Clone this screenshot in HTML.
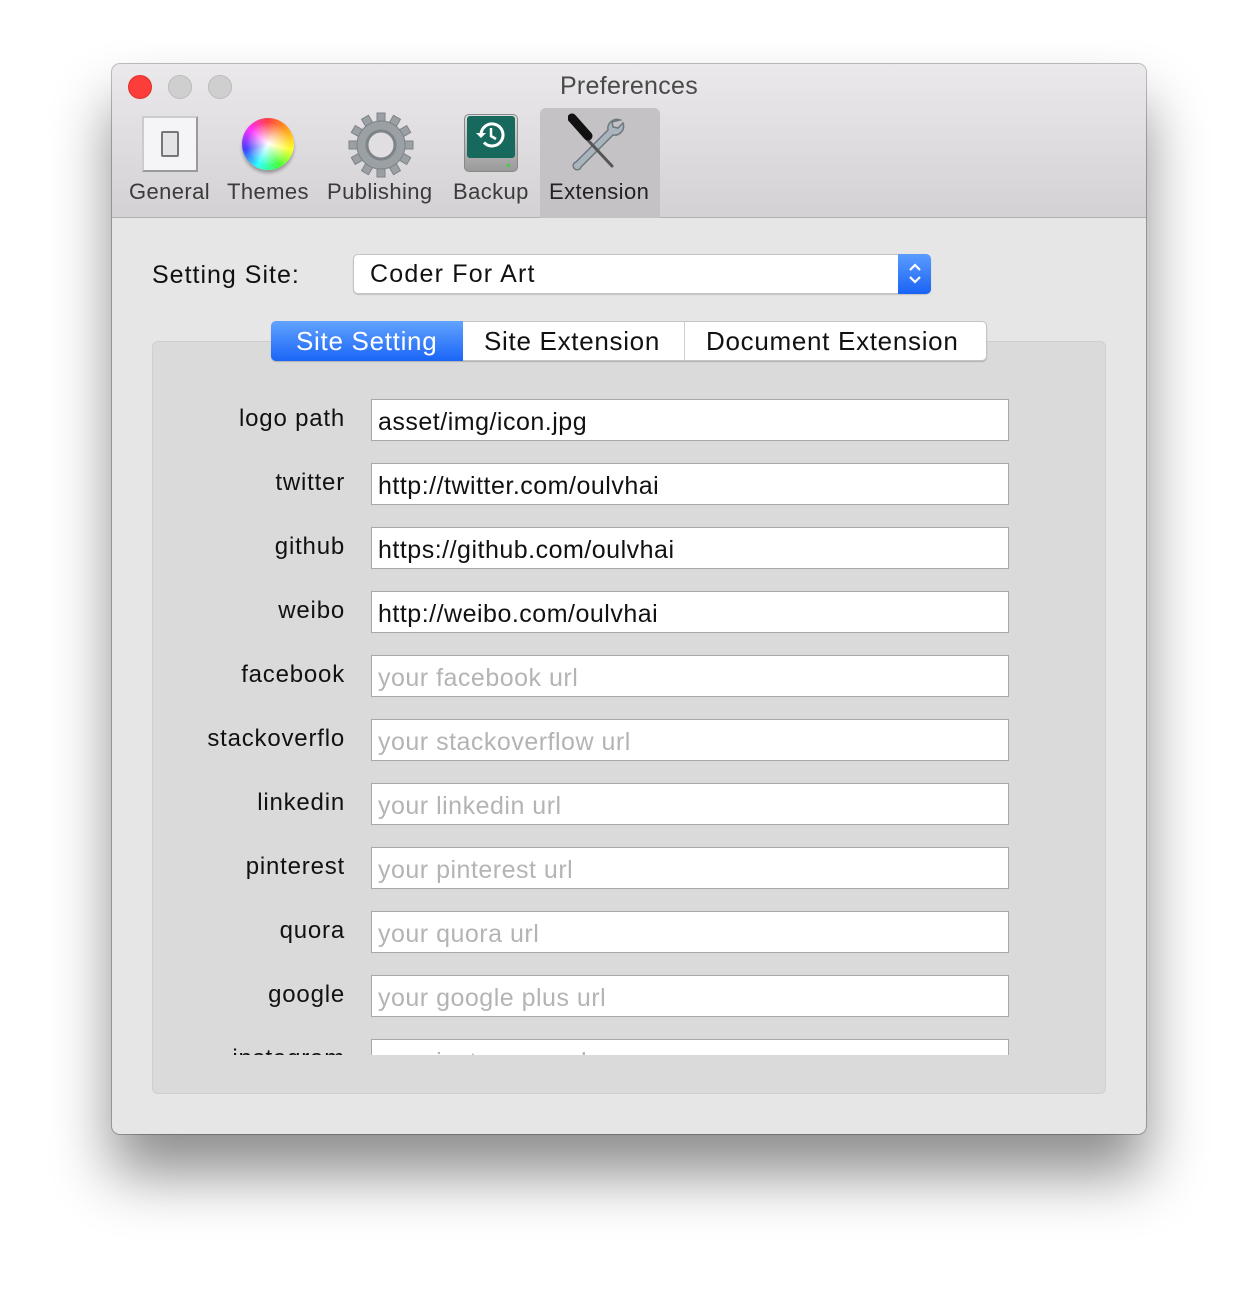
<!DOCTYPE html>
<html><head><meta charset="utf-8"><style>
*{margin:0;padding:0;box-sizing:border-box}
body{width:1258px;height:1294px;background:#fff;position:relative;overflow:hidden;font-family:"Liberation Sans",Arial,sans-serif}
.win{position:absolute;left:112px;top:64px;width:1034px;height:1070px;background:#e6e6e6;border-radius:8px;box-shadow:0 40px 60px rgba(0,0,0,.45),0 0 0 1px rgba(0,0,0,.25);overflow:hidden}
.tb{position:absolute;left:0;top:0;width:100%;height:154px;background:linear-gradient(#ebe9eb,#d3d1d3);border-bottom:1px solid #b0b0b0}
.dot{position:absolute;top:11px;width:24px;height:24px;border-radius:50%}
.title{position:absolute;left:0;width:100%;top:8px;text-align:center;font-size:25px;color:#4a4a4a;letter-spacing:.3px}
.lbl{position:absolute;top:115px;font-size:22px;color:#3b3b3b;letter-spacing:.4px}
.a{position:absolute}
.row .l{position:absolute;right:801px;font-size:24px;color:#111;text-align:right;white-space:nowrap;letter-spacing:.8px}
.f{position:absolute;left:259px;width:638px;height:42px;background:#fff;border:1px solid #a8a8a8;font-size:25px;padding:8px 0 0 6px;color:#111;white-space:nowrap;overflow:hidden;letter-spacing:.5px}
.ph{color:#b4b4b4}
</style></head><body>
<div class="win">
 <div class="tb">
  <div class="dot" style="left:16px;background:#fc3d39;border:1px solid #e0322e"></div>
  <div class="dot" style="left:56px;background:#d0cfd0;border:1px solid #bbb"></div>
  <div class="dot" style="left:96px;background:#d0cfd0;border:1px solid #bbb"></div>
  <div class="title" style="left:0px">Preferences</div>
  <div class="a" style="left:428px;top:44px;width:120px;height:110px;background:#c4c2c4;border-radius:6px 6px 0 0"></div>
  <div class="a" style="left:30px;top:52px;width:56px;height:56px;background:#f5f5f7;border:2px solid #9a9a9a;border-top-color:#ccc;border-left-color:#ccc"></div>
  <div class="a" style="left:49px;top:67px;width:18px;height:26px;background:#e4e4e6;border:2px solid #777;border-radius:2px"></div>
  <div class="a" style="left:130px;top:54px;width:52px;height:52px;border-radius:50%;background:radial-gradient(circle at 50% 50%,#fff 0,rgba(255,255,255,0) 60%),conic-gradient(from 0deg,#ff4040,#ffa020,#ffff30,#40ff40,#30ffff,#4040ff,#ff30ff,#ff4040);box-shadow:0 3px 3px rgba(0,0,0,.3)"></div>
  <svg class="a" style="left:236px;top:48px" width="66" height="66" viewBox="-33 -33 66 66">
   <g fill="#9aa0a4" stroke="#7d8387" stroke-width="1">
    <path d="M-4,-32h8v10h-8z M-4,22h8v10h-8z M22,-4h10v8h-10z M-32,-4h10v8h-10z" />
    <path transform="rotate(30)" d="M-4,-32h8v10h-8z M-4,22h8v10h-8z M22,-4h10v8h-10z M-32,-4h10v8h-10z" />
    <path transform="rotate(60)" d="M-4,-32h8v10h-8z M-4,22h8v10h-8z M22,-4h10v8h-10z M-32,-4h10v8h-10z" />
    <circle r="24"/>
   </g>
   <circle r="14" fill="#e0dee0" stroke="#7d8387" stroke-width="3"/>
  </svg>
  <div class="a" style="left:352px;top:50px;width:54px;height:58px;border-radius:5px;background:linear-gradient(#ddd,#9a9a9a);border:1px solid #888"></div>
  <div class="a" style="left:355px;top:52px;width:48px;height:42px;background:#17695d;border-radius:3px"></div>
  <svg class="a" style="left:363px;top:55px" width="32" height="32" viewBox="0 0 32 32"><path d="M6 16a11 11 0 1 1 3 7.5" fill="none" stroke="#fff" stroke-width="3"/><path d="M1 14l5 5 5-5z" fill="#fff"/><path d="M16 9v8l5 3" fill="none" stroke="#fff" stroke-width="2.5"/></svg>
  <div class="a" style="left:395px;top:100px;width:3px;height:3px;background:#4c4"></div>
  <svg class="a" style="left:456px;top:48px" width="62" height="62" viewBox="0 0 62 62">
   <path d="M52 8a9 9 0 0 0-12 10L8 50a4 4 0 1 0 5 5L45 23a9 9 0 0 0 10-12l-5 5-5-1-1-5z" fill="#aab4bc" stroke="#6d777f" stroke-width="1.5"/>
   <path d="M16 24L44 54" stroke="#555" stroke-width="3" stroke-linecap="round"/>
   <path d="M4 6L20 24" stroke="#111" stroke-width="9" stroke-linecap="round"/>
  </svg>
  <div class="lbl" style="left:17px">General</div>
  <div class="lbl" style="left:115px">Themes</div>
  <div class="lbl" style="left:215px">Publishing</div>
  <div class="lbl" style="left:341px">Backup</div>
  <div class="lbl" style="left:437px;color:#222">Extension</div>
 </div>
 <div class="a" style="left:40px;top:197px;font-size:25px;color:#111;letter-spacing:1px">Setting Site:</div>
 <div class="a" style="left:241px;top:190px;width:578px;height:40px;background:#fff;border-radius:5px;border:1px solid #c4c4c4;box-shadow:0 1px 1px rgba(0,0,0,.15);font-size:25px;padding:5px 0 0 16px;color:#111;letter-spacing:1.2px">Coder For Art</div>
 <div class="a" style="left:786px;top:190px;width:33px;height:40px;background:linear-gradient(#5a9cff,#1a63f5);border-radius:0 5px 5px 0"></div>
 <svg class="a" style="left:794px;top:196px" width="18" height="28" viewBox="0 0 18 28"><path d="M4 10l5-5 5 5M4 17l5 5 5-5" fill="none" stroke="#fff" stroke-width="2.2"/></svg>
 <div class="a" style="left:40px;top:277px;width:954px;height:753px;background:#dadada;border:1px solid #cfcfcf;border-radius:6px"></div>
 <div class="a" style="left:159px;top:257px;width:716px;height:40px;background:#fff;border:1px solid #c4c4c4;border-radius:5px;box-shadow:0 1px 1px rgba(0,0,0,.2);font-size:26px;color:#111;letter-spacing:.7px">
  <div class="a" style="left:-1px;top:-1px;width:192px;height:40px;background:linear-gradient(#62a3ff,#1a65f7);border-radius:5px 0 0 5px;color:#fff;padding:5px 0 0 25px">Site Setting</div>
  <div class="a" style="left:212px;top:4px">Site Extension</div>
  <div class="a" style="left:412px;top:0;width:1px;height:38px;background:#d0d0d0"></div>
  <div class="a" style="left:434px;top:4px">Document Extension</div>
 </div>
 <div class="a row" style="left:0;top:0;width:1034px;height:991px;overflow:hidden">
  <div class="l" style="top:341px">logo path</div><div class="f" style="top:335px">asset/img/icon.jpg</div>
  <div class="l" style="top:405px">twitter</div><div class="f" style="top:399px">http://twitter.com/oulvhai</div>
  <div class="l" style="top:469px">github</div><div class="f" style="top:463px">https://github.com/oulvhai</div>
  <div class="l" style="top:533px">weibo</div><div class="f" style="top:527px">http://weibo.com/oulvhai</div>
  <div class="l" style="top:597px">facebook</div><div class="f ph" style="top:591px">your facebook url</div>
  <div class="l" style="top:661px">stackoverflo</div><div class="f ph" style="top:655px">your stackoverflow url</div>
  <div class="l" style="top:725px">linkedin</div><div class="f ph" style="top:719px">your linkedin url</div>
  <div class="l" style="top:789px">pinterest</div><div class="f ph" style="top:783px">your pinterest url</div>
  <div class="l" style="top:853px">quora</div><div class="f ph" style="top:847px">your quora url</div>
  <div class="l" style="top:917px">google</div><div class="f ph" style="top:911px">your google plus url</div>
  <div class="l" style="top:981px">instagram</div><div class="f ph" style="top:975px">your instagram url</div>
 </div>
</div>
</body></html>
